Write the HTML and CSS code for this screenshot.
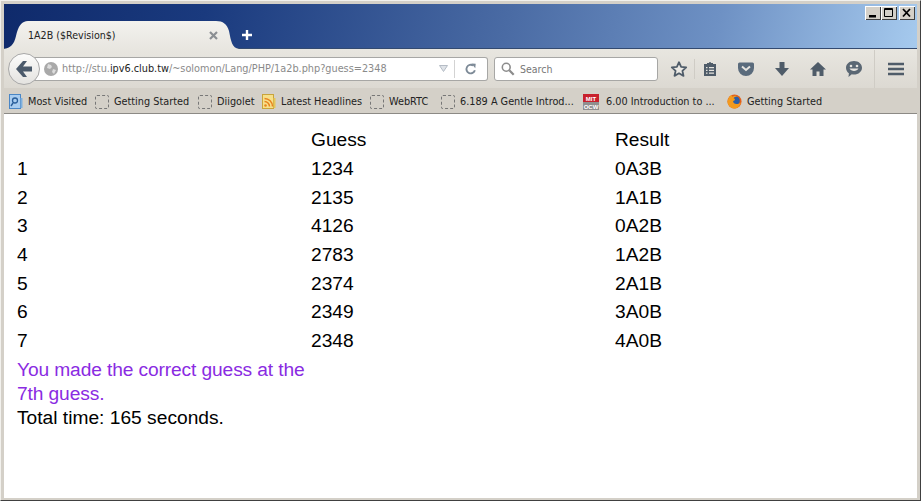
FILE: index.html
```html
<!DOCTYPE html>
<html lang="en">
<head>
<meta charset="utf-8">
<title>1A2B ($Revision$)</title>
<link rel="stylesheet" href="styles.css">
</head>
<body>
<div class="window">
  <header class="titlebar">
    <div class="winbtns">
      <span class="winbtn"><svg width="16" height="14" viewBox="0 0 16 14"><rect x="4" y="9" width="7" height="2.500" fill="#000"/></svg></span>
      <span class="winbtn"><svg width="16" height="14" viewBox="0 0 16 14"><path d="M3.500 2.500h8v8h-8z M3 3.500h9" fill="none" stroke="#000"/></svg></span>
      <span class="winbtn winbtn-close"><svg width="16" height="14" viewBox="0 0 16 14"><path d="M4 3l7 7.500M11 3l-7 7.500" fill="none" stroke="#000" stroke-width="1.800"/></svg></span>
    </div>
    <div class="tabstrip">
      <div class="tab">
        <svg class="tab-edge" width="24" height="28" viewBox="0 0 24 28"><defs><linearGradient id="tabfill" x1="0" y1="0" x2="0" y2="1"><stop offset="0" stop-color="#f3f2ee"/><stop offset="1" stop-color="#e8e6e0"/></linearGradient></defs><path d="M0 28C6 27 10 24 12 15 14 5 18 0 24 0V28Z" fill="url(#tabfill)"/></svg>
        <div class="tab-body">
          <span class="tab-title">1A2B ($Revision$)</span>
          <svg class="tab-close" width="9" height="9" viewBox="0 0 9 9"><path d="M1 1l7 7M8 1l-7 7" stroke="#8b8f93" stroke-width="2.200"/></svg>
        </div>
        <svg class="tab-edge" width="23" height="28" viewBox="0 0 23 28"><path d="M0 0C7 0 11 3 13 10 15 20 16 27 23 28H0Z" fill="url(#tabfill)"/></svg>
      </div>
      <svg class="newtab" width="12" height="12" viewBox="0 0 12 12"><path d="M6 1v10M1 6h10" stroke="#fff" stroke-width="2.400"/></svg>
    </div>
  </header>

  <nav class="navbar">
    <div class="back"><svg width="16" height="16" viewBox="0 0 16 16"><path d="M7 0L0 8l7 8h4L7 10.500h9v-5H7L11 0z" fill="#4b5a6b"/></svg></div>
    <div class="urlbar">
      <svg class="globe" width="14" height="14" viewBox="0 0 14 14"><circle cx="7" cy="7" r="7" fill="#a9a9a9"/><path d="M4 2l3 1 1 2-2 2-3-1zM9 7l3 1-2 4-2-2z" fill="#dcdcdc"/></svg>
      <span class="url"><span class="url-dim">http://stu.</span>ipv6.club.tw<span class="url-dim">/~solomon/Lang/PHP/1a2b.php?guess=2348</span></span>
      <svg class="dropdown" width="9" height="7" viewBox="0 0 9 7"><path d="M0.500 0.500h8L4.500 6.500z" fill="#dfe3e8" stroke="#b5bcc5"/></svg>
      <span class="urlsep"></span>
      <svg class="reload" width="12" height="12" viewBox="0 0 14 14"><path d="M11.500 8.500A5 5 0 1 1 9.500 3" fill="none" stroke="#7d8a97" stroke-width="2.200"/><path d="M7.500 0.500l5 .5-.5 5z" fill="#7d8a97"/></svg>
    </div>
    <div class="searchbar">
      <svg width="14" height="14" viewBox="0 0 16 16"><circle cx="6" cy="6" r="4.500" fill="none" stroke="#8c8c8c" stroke-width="1.800"/><path d="M9.500 9.500l5 5" stroke="#8c8c8c" stroke-width="2.600"/></svg>
      <span>Search</span>
    </div>
    <div class="tools">
      <svg class="ic-star" width="18" height="18" viewBox="0 0 18 18"><path d="M9 2.200l2.100 4.700 5.100.5-3.800 3.400 1.100 5.100L9 13.300l-4.500 2.600 1.100-5.100-3.800-3.400 5.100-.5z" fill="#ebe9e4" stroke="#4f5c69" stroke-width="1.800" stroke-linejoin="round"/></svg>
      <span class="toolsep"></span>
      <svg class="ic-list" width="16" height="16" viewBox="0 0 16 16"><path d="M5 2h2a1 1 0 0 1 2 0h2v1h3v12H2V3h3z" fill="#4f5c69"/><path d="M4 6h1.500v1.200H4zM7 6h5v1.200H7zM4 8.800h1.500V10H4zM7 8.800h5V10H7zM4 11.600h1.500v1.200H4zM7 11.600h5v1.200H7z" fill="#e6e4df"/></svg>
      <svg class="ic-pocket" width="18" height="16" viewBox="0 0 18 16"><path d="M2.500 1.500h13A1.500 1.500 0 0 1 17 3v4a8 8 0 0 1-16 0V3a1.500 1.500 0 0 1 1.500-1.500z" fill="#5a6b7c"/><path d="M5 5.500l4 3.500 4-3.500" fill="none" stroke="#e6e4df" stroke-width="2"/></svg>
      <svg class="ic-down" width="16" height="16" viewBox="0 0 16 16"><path d="M5.500 1h5v6H15l-7 8-7-8h4.500z" fill="#4f5c69"/></svg>
      <svg class="ic-home" width="18" height="16" viewBox="0 0 18 16"><path d="M9 1L1 8.500h2.500V15h4v-4.500h3V15h4V8.500H17z" fill="#4f5c69"/></svg>
      <svg class="ic-chat" width="18" height="18" viewBox="0 0 18 18"><path d="M9 1c4.500 0 8 2.900 8 6.800s-3.500 6.800-8 6.800c-.8 0-1.500-.1-2.200-.3L3.500 17l.4-3.700C2 12 1 10 1 7.800 1 3.900 4.500 1 9 1z" fill="#5a6773"/><circle cx="6" cy="6" r="1.300" fill="#e6e4df"/><circle cx="12" cy="6" r="1.300" fill="#e6e4df"/><path d="M4.500 8.500c1.500 3.200 7.500 3.200 9 0z" fill="#e6e4df"/></svg>
      <span class="toolsep toolsep-tall"></span>
      <svg class="ic-menu" width="16" height="14" viewBox="0 0 16 14"><path d="M0 2h16M0 7h16M0 12h16" stroke="#4f5c69" stroke-width="2.400"/></svg>
    </div>
  </nav>

  <div class="bookmarks">
    <span class="bm"><svg width="14" height="16" viewBox="0 0 14 16"><rect x="0.500" y="0.500" width="11" height="14" fill="#a9cdf0" stroke="#4a86c5"/><rect x="11.500" y="4" width="2" height="10" fill="#7fb0de"/><circle cx="6" cy="6.500" r="2.500" fill="none" stroke="#2a5f9b" stroke-width="1.300"/><path d="M4 9l-2 3" stroke="#2a5f9b" stroke-width="1.400"/></svg>Most Visited</span>
    <span class="bm"><i class="blank"></i>Getting Started</span>
    <span class="bm"><i class="blank"></i>Diigolet</span>
    <span class="bm"><svg width="14" height="16" viewBox="0 0 14 16"><rect x="0.500" y="0.500" width="11" height="14" fill="#f6e08a" stroke="#c9a43b"/><rect x="11.500" y="4" width="2" height="10" fill="#e5c65a"/><circle cx="3.500" cy="11.500" r="1.300" fill="#e8821e"/><path d="M2.500 7.500a5 5 0 0 1 5 5M2.500 4.500a8 8 0 0 1 8 8" fill="none" stroke="#e8821e" stroke-width="1.500"/></svg>Latest Headlines</span>
    <span class="bm"><i class="blank"></i>WebRTC</span>
    <span class="bm"><i class="blank"></i>6.189 A Gentle Introd...</span>
    <span class="bm bm-wide"><svg width="16" height="16" viewBox="0 0 16 16"><rect width="16" height="8" fill="#c8202c"/><rect y="8" width="16" height="8" fill="#8f8f8f"/><text x="8" y="7" class="ocw-a">MIT</text><text x="8" y="14.500" class="ocw-b">OCW</text></svg>6.00 Introduction to ...</span>
    <span class="bm"><svg width="15" height="15" viewBox="0 0 16 16"><circle cx="8" cy="8" r="7.500" fill="#e25f1a"/><circle cx="8.800" cy="7.200" r="4.800" fill="#2b5fa8"/><path d="M1 6C2 3 3.500 1.500 5 1L5.500 3C7.500 1.500 10 1.500 12 2.500 10 2.500 8 3 7 4.500 9 5 9 7 6.500 7.500 6.500 11 11 12 14.800 9 14 12.500 11.500 15.500 8 15.500 4 15.500 .5 12 .5 8z" fill="#f39a1e"/></svg>Getting Started</span>
  </div>

  <main class="content">
    <div class="scores">
      <div></div><div>Guess</div><div>Result</div>
      <div>1</div><div>1234</div><div>0A3B</div>
      <div>2</div><div>2135</div><div>1A1B</div>
      <div>3</div><div>4126</div><div>0A2B</div>
      <div>4</div><div>2783</div><div>1A2B</div>
      <div>5</div><div>2374</div><div>2A1B</div>
      <div>6</div><div>2349</div><div>3A0B</div>
      <div>7</div><div>2348</div><div>4A0B</div>
    </div>
    <p class="win">You made the correct guess at the 7th guess.</p>
    <p class="time">Total time: 165 seconds.</p>
  </main>
</div>
</body>
</html>
```
FILE: styles.css
```css
* { box-sizing: border-box; }
html, body { margin: 0; padding: 0; width: 921px; height: 501px; overflow: hidden; }
body { background: #d4d0c8; font-family: "Liberation Sans", Arial, sans-serif; }

.window {
  width: 921px;
  height: 501px;
  display: flex;
  flex-direction: column;
  border: 1px solid #f2f1ed;
  border-right-color: #404040;
  border-bottom-color: #404040;
  background: #d4d0c8;
  padding: 3px 3px 2px 3px;
}

.titlebar {
  height: 45px;
  flex: none;
  display: flex;
  flex-direction: column;
  justify-content: flex-end;
  position: relative;
  background: linear-gradient(102deg, #0f2a6b 0%, #1a3a7e 22%, #4a6ba4 55%, #6e91c4 78%, #a6caee 100%);
  border-bottom: 1px solid #334a70;
}
.winbtns {
  position: absolute;
  top: 2px;
  right: 2px;
  display: flex;
}
.winbtn {
  width: 16px;
  height: 14px;
  background: #d4d0c8;
  box-shadow: inset 1px 1px 0 #fff, inset -1px -1px 0 #404040;
  display: block;
  line-height: 0;
}
.winbtn-close { margin-left: 2px; }

.tabstrip {
  display: flex;
  align-items: center;
  height: 28px;
  margin-bottom: -1px;
}
.tab {
  display: flex;
  height: 28px;
  flex: none;
}
.tab-edge { display: block; flex: none; }
.tab-body {
  width: 188px;
  display: flex;
  align-items: center;
  justify-content: space-between;
  background: linear-gradient(#f3f2ee, #e8e6e0);
  font-family: "DejaVu Sans", sans-serif;
  font-stretch: condensed;
  font-size: 10.600px;
  color: #222;
}
.tab-close { margin-right: -2px; flex: none; position: relative; }
.tab-title { line-height: 14px; }
.newtab { margin-left: 2px; flex: none; position: relative; }

.navbar {
  flex: none;
  height: 39px;
  display: flex;
  align-items: center;
  background: linear-gradient(#e8e6e0, #dcd9d2);
  padding-left: 4px;
}
.back {
  width: 32px;
  height: 32px;
  border-radius: 50%;
  background: linear-gradient(#fcfcfb, #e4e3e0);
  border: 1px solid #a8a8a8;
  display: flex;
  align-items: center;
  justify-content: center;
  position: relative;
  z-index: 1;
  flex: none;
}
.urlbar {
  margin-left: -6px;
  width: 454px;
  height: 24px;
  flex: none;
  display: flex;
  align-items: center;
  background: #fff;
  border: 1px solid #a7a7a5;
  border-left: 0;
  border-radius: 0 3px 3px 0;
  padding-left: 10px;
  font-family: "DejaVu Sans", sans-serif;
  font-stretch: condensed;
  font-size: 10.800px;
  color: #222;
}
.globe { flex: none; }
.url { margin-left: 4px; width: 377px; flex: none; white-space: nowrap; overflow: hidden; line-height: 14px; }
.url-dim { color: #8a8a8a; }
.dropdown { flex: none; }
.urlsep { width: 1px; height: 18px; background: #d3d3d3; margin-left: 6px; flex: none; }
.reload { margin-left: 10px; flex: none; }
.searchbar {
  margin-left: 6px;
  width: 164px;
  height: 24px;
  flex: none;
  display: flex;
  align-items: center;
  gap: 5px;
  padding-left: 6px;
  background: #fff;
  border: 1px solid #a7a7a5;
  border-radius: 3px;
  font-family: "DejaVu Sans", sans-serif;
  font-stretch: condensed;
  font-size: 10.500px;
  color: #777;
}

.tools { display: flex; align-items: center; margin-left: 12px; flex: none; }
.toolsep { width: 1px; height: 20px; background: #cfccc5; margin: 0 7px 0 6px; flex: none; }
.toolsep-tall { height: 38px; margin: 0 13px 0 11px; }
.ic-pocket { margin-left: 19px; }
.ic-down { margin-left: 19px; }
.ic-home { margin-left: 19px; }
.ic-chat { margin-left: 18px; }

.bookmarks {
  flex: none;
  height: 26px;
  display: grid;
  grid-template-columns: 86px 103px 64px 108px 71px 142px 144px auto;
  align-items: center;
  justify-content: start;
  padding: 2px 0 0 5px;
  background: #d4d0c8;
  border-bottom: 1px solid #8c8a85;
  font-family: "DejaVu Sans", sans-serif;
  font-stretch: condensed;
  font-size: 10.800px;
  color: #222;
}
.bm { display: flex; align-items: center; gap: 5px; white-space: nowrap; }
.bm-wide { gap: 7px; }
.blank {
  display: block;
  width: 14px;
  height: 14px;
  border: 1px dashed #777;
  border-radius: 2px;
}
.ocw-a, .ocw-b { font-size: 6px; font-weight: 700; fill: #fff; text-anchor: middle; font-family: "Liberation Sans", sans-serif; }

.content {
  flex: 1;
  min-height: 0;
  background: #fff;
  color: #000;
  padding: 12px 0 0 13px;
  font-size: 19.200px;
  line-height: 24px;
}
.scores {
  display: grid;
  grid-template-columns: 294px 304px 1fr;
  grid-auto-rows: 28.700px;
  align-items: center;
}
.win { margin: 2px 0 0; width: 294px; color: #8a2be2; letter-spacing: -0.120px; }
.time { margin: 0; }
```
